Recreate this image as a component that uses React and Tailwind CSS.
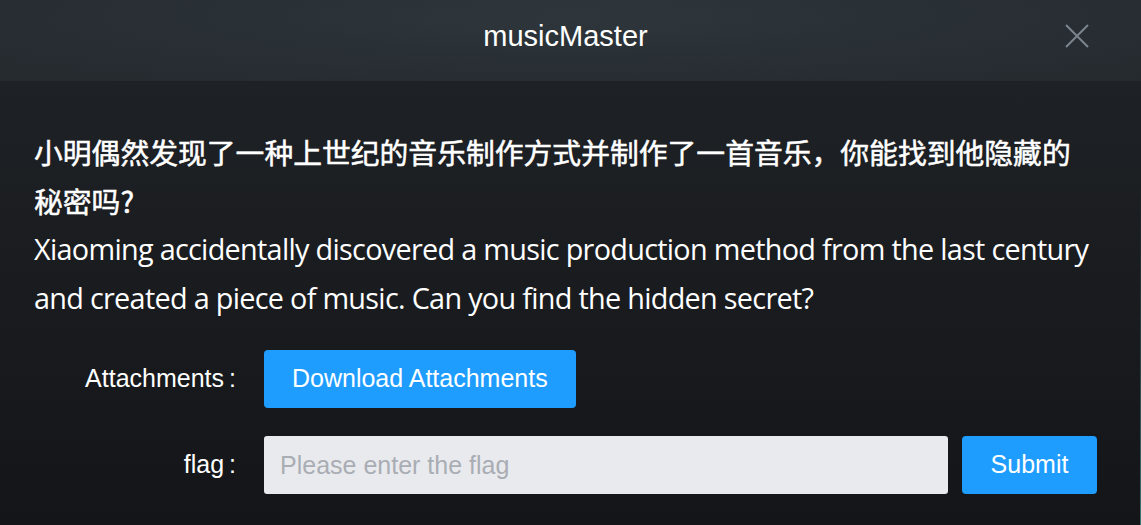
export default function App() {
  const body = { fontFamily: '"Open Sans", "Noto Sans CJK SC", sans-serif' };
  const arial = { fontFamily: '"Liberation Sans", "Noto Sans CJK SC", sans-serif' };
  const cjk = { fontFamily: '"Noto Sans CJK SC", sans-serif' };
  return (
    <div className="relative w-[1141px] h-[525px] overflow-hidden bg-gradient-to-b from-[#202428] to-[#141518]">
      <div className="h-[81px] bg-[radial-gradient(ellipse_at_50%_20%,#2e363c_0%,#282e33_60%,#252a2f_100%)] flex items-center justify-center relative">
        <div className="text-[29px] text-white pr-[10px] pb-[8px]" style={arial}>musicMaster</div>
        <svg className="absolute left-[1065px] top-[24px]" width="24" height="24" viewBox="0 0 24 24">
          <path d="M1 1 L23 23 M23 1 L1 23" stroke="#7c858e" strokeWidth="2" fill="none" />
        </svg>
      </div>
      <div className="pt-[47px] pl-[34px] text-white text-[28.8px] leading-[48.5px]" style={body}>
        <div className="whitespace-nowrap font-normal [-webkit-text-stroke:0.5px_white]" style={cjk}>小明偶然发现了一种上世纪的音乐制作方式并制作了一首音乐，你能找到他隐藏的</div>
        <div className="whitespace-nowrap font-normal [-webkit-text-stroke:0.5px_white]" style={cjk}>秘密吗?</div>
        <div className="whitespace-nowrap tracking-[-0.7px]">Xiaoming accidentally discovered a music production method from the last century</div>
        <div className="whitespace-nowrap tracking-[-0.7px]">and created a piece of music. Can you find the hidden secret?</div>
      </div>
      <div className="mt-[28px] flex flex-col gap-[28px] pr-[44px] text-[25px]" style={arial}>
        <div className="flex items-center">
          <div className="w-[238px] text-right text-white">Attachments<span className="ml-[5px] mr-[2px]">:</span></div>
          <button className="ml-[26px] h-[58px] px-[28px] rounded-[4px] bg-[#1e9dff] text-white text-[25px]" style={arial}>Download Attachments</button>
        </div>
        <div className="flex items-center">
          <div className="w-[238px] text-right text-white">flag<span className="ml-[5px] mr-[2px]">:</span></div>
          <input
            className="ml-[26px] h-[58px] w-[684px] rounded-[3px] bg-[#e9eaee] px-[16px] text-[25px] text-[#333] placeholder:text-[#a9adb4] outline-none"
            style={arial}
            placeholder="Please enter the flag"
          />
          <button className="ml-[14px] h-[58px] w-[135px] rounded-[4px] bg-[#1e9dff] text-white text-[25px]" style={arial}>Submit</button>
        </div>
      </div>
      <div className="absolute right-0 top-[180px] bottom-0 w-px bg-gradient-to-b from-transparent to-[#3f7373]"></div>
    </div>
  );
}
